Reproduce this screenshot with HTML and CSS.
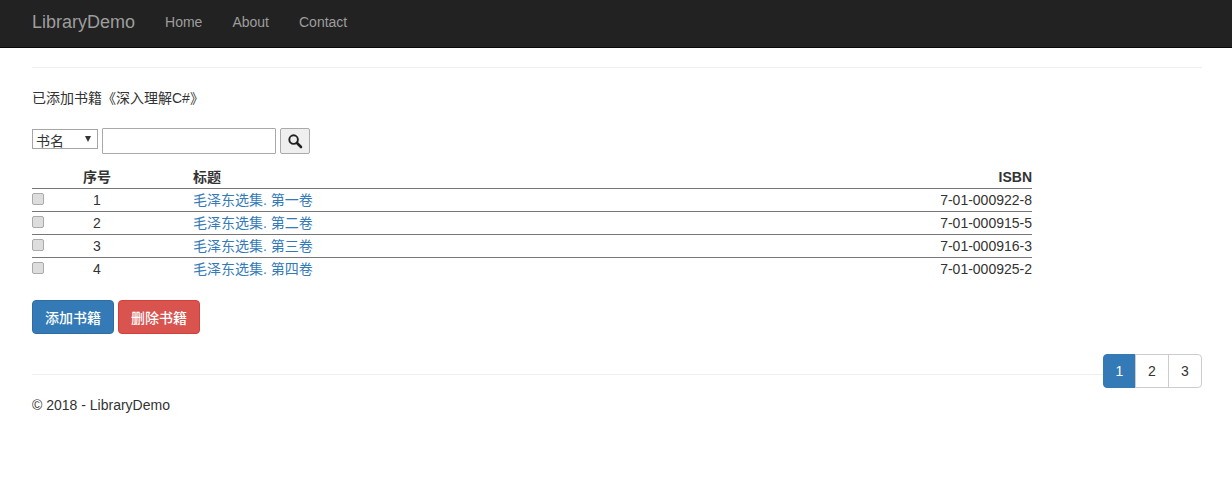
FILE: index.html
```html
<!DOCTYPE html>
<html lang="zh">
<head>
    <meta charset="UTF-8">
    <title>LibraryDemo</title>
    <link rel="stylesheet" href="styles.css">
</head>
<body>
    <nav class="navbar">
        <a class="brand" href="#">LibraryDemo</a>
        <a class="nav-link" href="#">Home</a>
        <a class="nav-link" href="#">About</a>
        <a class="nav-link" href="#">Contact</a>
    </nav>

    <div class="container">
        <hr class="top-rule">
        <p class="message">已添加书籍《深入理解C#》</p>

        <form class="search-form">
            <div class="select-wrap">
                <select class="search-type">
                    <option>书名</option>
                </select>
            </div>
            <input type="text" class="search-input">
            <button type="button" class="search-btn">
                <svg width="15" height="15" viewBox="0 0 15 15"><circle cx="5.6" cy="5.6" r="4.3" fill="none" stroke="#222" stroke-width="1.9"/><path d="M9 9L13 13" stroke="#222" stroke-width="2.6" stroke-linecap="round"/></svg>
            </button>
        </form>

        <table class="book-table">
            <tr>
                <th class="col-check"></th>
                <th class="col-num">序号</th>
                <th class="col-title">标题</th>
                <th class="col-isbn">ISBN</th>
            </tr>
            <tr>
                <td><input type="checkbox"></td>
                <td class="col-num">1</td>
                <td><a href="#">毛泽东选集. 第一卷</a></td>
                <td class="col-isbn">7-01-000922-8</td>
            </tr>
            <tr>
                <td><input type="checkbox"></td>
                <td class="col-num">2</td>
                <td><a href="#">毛泽东选集. 第二卷</a></td>
                <td class="col-isbn">7-01-000915-5</td>
            </tr>
            <tr>
                <td><input type="checkbox"></td>
                <td class="col-num">3</td>
                <td><a href="#">毛泽东选集. 第三卷</a></td>
                <td class="col-isbn">7-01-000916-3</td>
            </tr>
            <tr>
                <td><input type="checkbox"></td>
                <td class="col-num">4</td>
                <td><a href="#">毛泽东选集. 第四卷</a></td>
                <td class="col-isbn">7-01-000925-2</td>
            </tr>
        </table>

        <div class="actions">
            <button type="button" class="btn btn-primary">添加书籍</button>
            <button type="button" class="btn btn-danger">删除书籍</button>
        </div>

        <ul class="pagination">
            <li class="active">1</li>
            <li>2</li>
            <li>3</li>
        </ul>

        <hr class="bottom-rule">
        <footer class="footer">© 2018 - LibraryDemo</footer>
    </div>
</body>
</html>
```

FILE: styles.css
```css
* {
    box-sizing: border-box;
}

body {
    margin: 0;
    font-family: "Liberation Sans", "Noto Sans CJK SC", Arial, sans-serif;
    font-size: 14px;
    line-height: 20px;
    color: #333;
    background-color: #fff;
}

a {
    color: #337ab7;
    text-decoration: none;
}

.navbar {
    display: flex;
    align-items: center;
    height: 48px;
    padding-left: 32px;
    padding-bottom: 4px;
    background-color: #222;
    border-bottom: 1px solid #080808;
}

.brand {
    font-size: 18px;
    color: #9d9d9d;
    margin-right: 30px;
}

.nav-link {
    color: #9d9d9d;
    margin-right: 30px;
}

.container {
    padding: 0 30px 0 32px;
}

.top-rule {
    margin: 19px 0 0;
    border: 0;
    border-top: 1px solid #eee;
}

.message {
    margin: 20px 0 0;
}

.search-form {
    display: flex;
    align-items: center;
    gap: 4px;
    margin-top: 20px;
    height: 26px;
}

.select-wrap {
    position: relative;
    width: 66px;
    height: 20px;
    margin-bottom: 4px;
}

.select-wrap::after {
    content: "";
    position: absolute;
    top: 7px;
    right: 7px;
    border-top: 6px solid #333;
    border-left: 3px solid transparent;
    border-right: 3px solid transparent;
}

.search-type {
    appearance: none;
    display: block;
    width: 100%;
    height: 100%;
    padding: 3px 0 0 3px;
    font-family: inherit;
    font-size: 14px;
    color: #333;
    background-color: #fff;
    border: 1px solid #a6a6a6;
    border-radius: 0;
}

.search-input {
    width: 174px;
    height: 26px;
    border: 1px solid #a9a9a9;
    border-radius: 1px;
    padding: 1px 2px;
}

.search-btn {
    display: flex;
    align-items: center;
    justify-content: center;
    width: 30px;
    height: 26px;
    padding: 0;
    background-color: #efefef;
    border: 1px solid #aaa;
    border-radius: 2px;
}

.book-table {
    width: 1000px;
    margin-top: 13px;
    border-collapse: collapse;
    table-layout: fixed;
}

.book-table th {
    height: 21px;
    padding: 0;
    font-weight: bold;
    text-align: left;
    border-bottom: 1px solid #777;
}

.book-table td {
    height: 23px;
    padding: 0;
    border-bottom: 1px solid #777;
}

.book-table tr:last-child td {
    border-bottom: 0;
}

.book-table input {
    appearance: none;
    display: block;
    width: 12px;
    height: 12px;
    margin: 0 0 2px;
    background-color: #ddd;
    border: 1px solid #aaa;
    border-radius: 2px;
}

.book-table .col-check {
    width: 35px;
}

.book-table .col-num {
    width: 126px;
    padding-right: 66px;
    text-align: center;
}

.book-table .col-title {
    width: 400px;
}

.book-table .col-isbn {
    text-align: right;
}

.actions {
    display: flex;
    gap: 4px;
    margin-top: 20px;
}

.btn {
    height: 34px;
    padding: 0 12px;
    font-family: inherit;
    font-size: 14px;
    font-weight: 500;
    color: #fff;
    border: 1px solid transparent;
    border-radius: 4px;
}

.btn-primary {
    background-color: #337ab7;
    border-color: #2e6da4;
}

.btn-danger {
    background-color: #d9534f;
    border-color: #d43f3a;
}

.pagination {
    display: flex;
    justify-content: flex-end;
    margin: 20px 0 0;
    padding: 0;
    list-style: none;
}

.pagination li {
    width: 34px;
    height: 34px;
    margin-left: -1px;
    line-height: 32px;
    text-align: center;
    background-color: #fff;
    border: 1px solid #ccc;
}

.pagination li.active {
    width: 33px;
    margin-left: 0;
    color: #fff;
    background-color: #337ab7;
    border-color: #337ab7;
    border-radius: 4px 0 0 4px;
}

.pagination li:last-child {
    border-radius: 0 4px 4px 0;
}

.bottom-rule {
    margin: -14px 0 0;
    border: 0;
    border-top: 1px solid #eee;
}

.footer {
    margin-top: 20px;
}
```
